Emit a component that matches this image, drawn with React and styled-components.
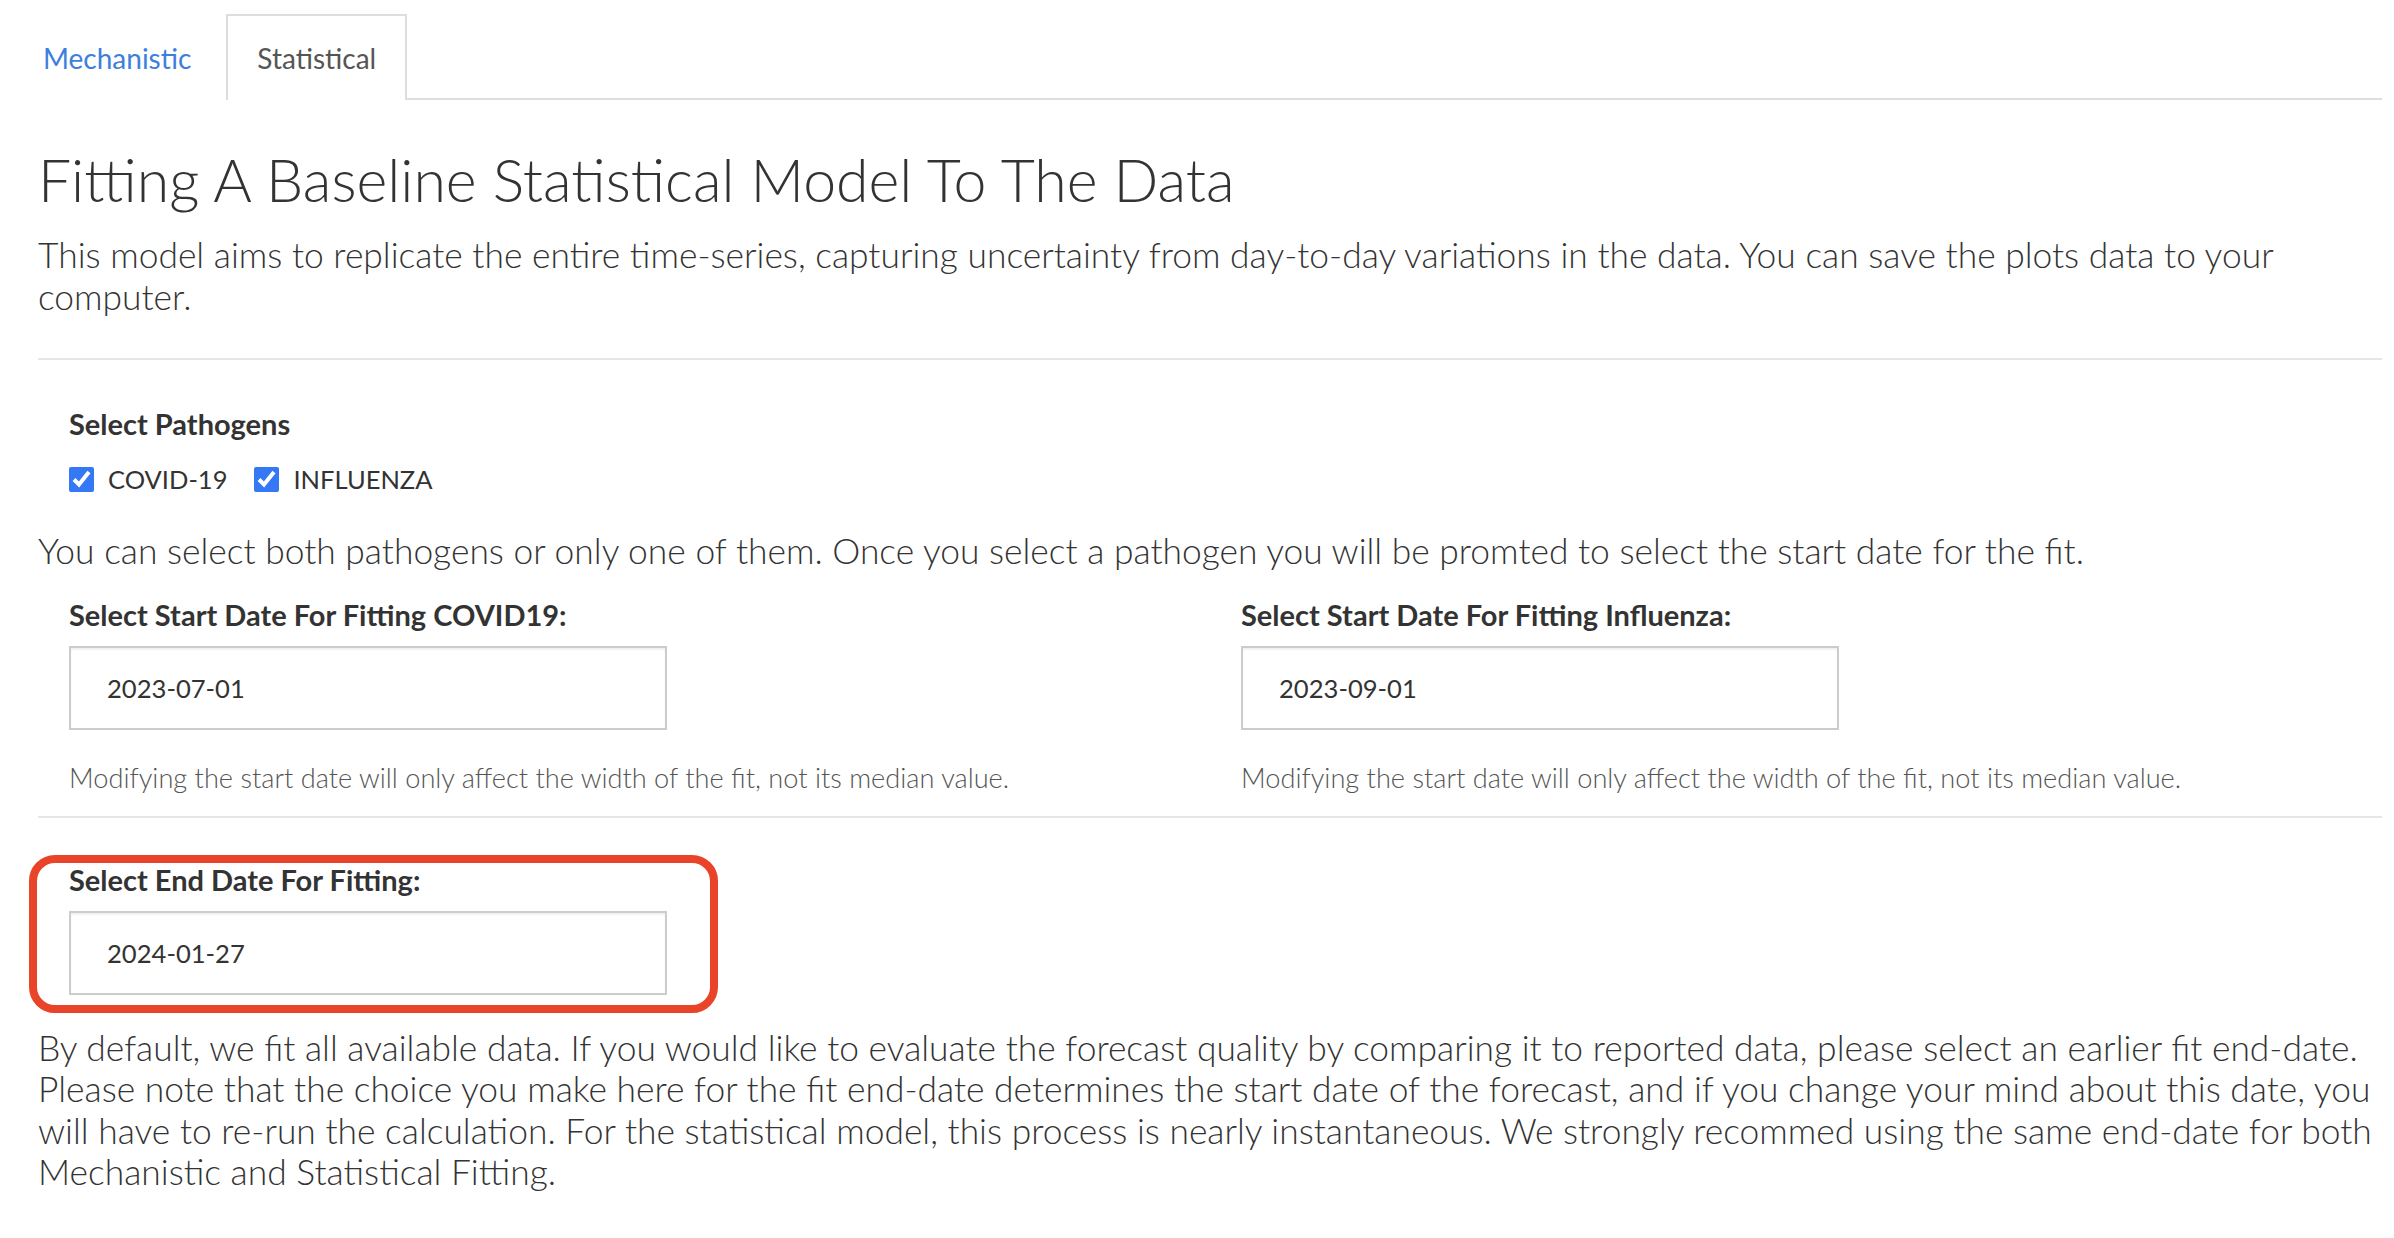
import React from 'react';
import styled, { createGlobalStyle } from 'styled-components';

const GlobalStyle = createGlobalStyle`
	body {
		margin: 0;
		background: #fff;
		font-family: Lato, "Liberation Sans", sans-serif;
		color: #333;
	}
`;

const Page = styled.div`
	padding: 0 12px 40px 8px;
`;

const TabBar = styled.nav`
	display: flex;
	align-items: flex-end;
	height: 98px;
	border-bottom: 2px solid #ddd;
`;

const Tab = styled.div`
	height: 86px;
	box-sizing: border-box;
	padding: 0 ${p => p.active ? 29 : 33}px;
	display: flex;
	align-items: center;
	font-size: 28px;
	font-weight: 400;
	color: ${p => p.active ? '#555' : '#3d7fdc'};
	background: #fff;
	border: 2px solid ${p => p.active ? '#ddd' : 'transparent'};
	border-bottom: none;
	margin-bottom: -2px;
`;

const Content = styled.div`
	padding-left: 30px;
`;

const Title = styled.h2`
	margin: 38px 0 0;
	font-size: 59px;
	font-weight: 300;
	line-height: 84px;
`;

const Lead = styled.p`
	margin: ${p => p.top || 0}px 0 0;
	font-size: 35.4px;
	font-weight: 300;
	line-height: 41.5px;
`;

const Rule = styled.hr`
	margin: ${p => p.top}px 0 0;
	border: 0;
	border-top: 2px solid #e6e6e6;
`;

const Group = styled.div`
	padding: 0 31px;
	margin-top: ${p => p.top || 0}px;
`;

const Label = styled.div`
	font-size: 29px;
	font-weight: 700;
	line-height: 34px;
`;

const CheckRow = styled.div`
	display: flex;
	align-items: center;
	gap: 27px;
	margin-top: 21px;
	height: 34px;
`;

const Check = styled.label`
	display: flex;
	align-items: center;
	gap: 14px;
	font-size: 25.5px;
	font-weight: 400;

	input {
		margin: 0;
		width: 25px;
		height: 25px;
		accent-color: #3478f6;
	}
`;

const Columns = styled.div`
	display: grid;
	grid-template-columns: 1fr 1fr;
	margin-top: 26px;
`;

const DateInput = styled.div`
	margin-top: 14px;
	width: 598px;
	height: 84px;
	box-sizing: border-box;
	border: 2px solid #ccc;
	box-shadow: inset 0 2px 2px rgba(0, 0, 0, 0.06);
	padding-left: 36px;
	display: flex;
	align-items: center;
	font-size: 25.6px;
	font-weight: 400;
	color: #333;
`;

const Help = styled.div`
	margin-top: 31px;
	font-size: 27.2px;
	font-weight: 300;
	color: #555;
	line-height: 34px;
`;

const Highlight = styled.div`
	margin: 37px 0 0 -9px;
	width: 689px;
	box-sizing: border-box;
	border: 8px solid #e94329;
	border-radius: 26px;
	padding: 0 0 10px 32px;
`;

const Pathogens = ['COVID-19', 'INFLUENZA'];

const App = () => {
	return (
		<Page>
			<GlobalStyle />
			<TabBar>
				<Tab>Mechanistic</Tab>
				<Tab active>Statistical</Tab>
			</TabBar>

			<Content>
				<Title>Fitting A Baseline Statistical Model To The Data</Title>
				<Lead top={12}>
					This model aims to replicate the entire time-series, capturing uncertainty from day-to-day variations in the data. You can save the plots data to your computer.
				</Lead>
				<Rule top={41} />

				<Group top={47}>
					<Label>Select Pathogens</Label>
					<CheckRow>
						{Pathogens.map(name => (
							<Check key={name}>
								<input type="checkbox" defaultChecked />
								{name}
							</Check>
						))}
					</CheckRow>
				</Group>

				<Lead top={34}>
					You can select both pathogens or only one of them. Once you select a pathogen you will be promted to select the start date for the fit.
				</Lead>

				<Columns>
					<Group>
						<Label>Select Start Date For Fitting COVID19:</Label>
						<DateInput>2023-07-01</DateInput>
						<Help>Modifying the start date will only affect the width of the fit, not its median value.</Help>
					</Group>
					<Group>
						<Label>Select Start Date For Fitting Influenza:</Label>
						<DateInput>2023-09-01</DateInput>
						<Help>Modifying the start date will only affect the width of the fit, not its median value.</Help>
					</Group>
				</Columns>

				<Rule top={21} />

				<Highlight>
					<Label>Select End Date For Fitting:</Label>
					<DateInput>2024-01-27</DateInput>
				</Highlight>

				<Lead top={14}>
					By default, we fit all available data. If you would like to evaluate the forecast quality by comparing it to reported data, please select an earlier fit end-date. Please note that the choice you make here for the fit end-date determines the start date of the forecast, and if you change your mind about this date, you will have to re-run the calculation. For the statistical model, this process is nearly instantaneous. We strongly recommed using the same end-date for both Mechanistic and Statistical Fitting.
				</Lead>
			</Content>
		</Page>
	);
};

export default App;
